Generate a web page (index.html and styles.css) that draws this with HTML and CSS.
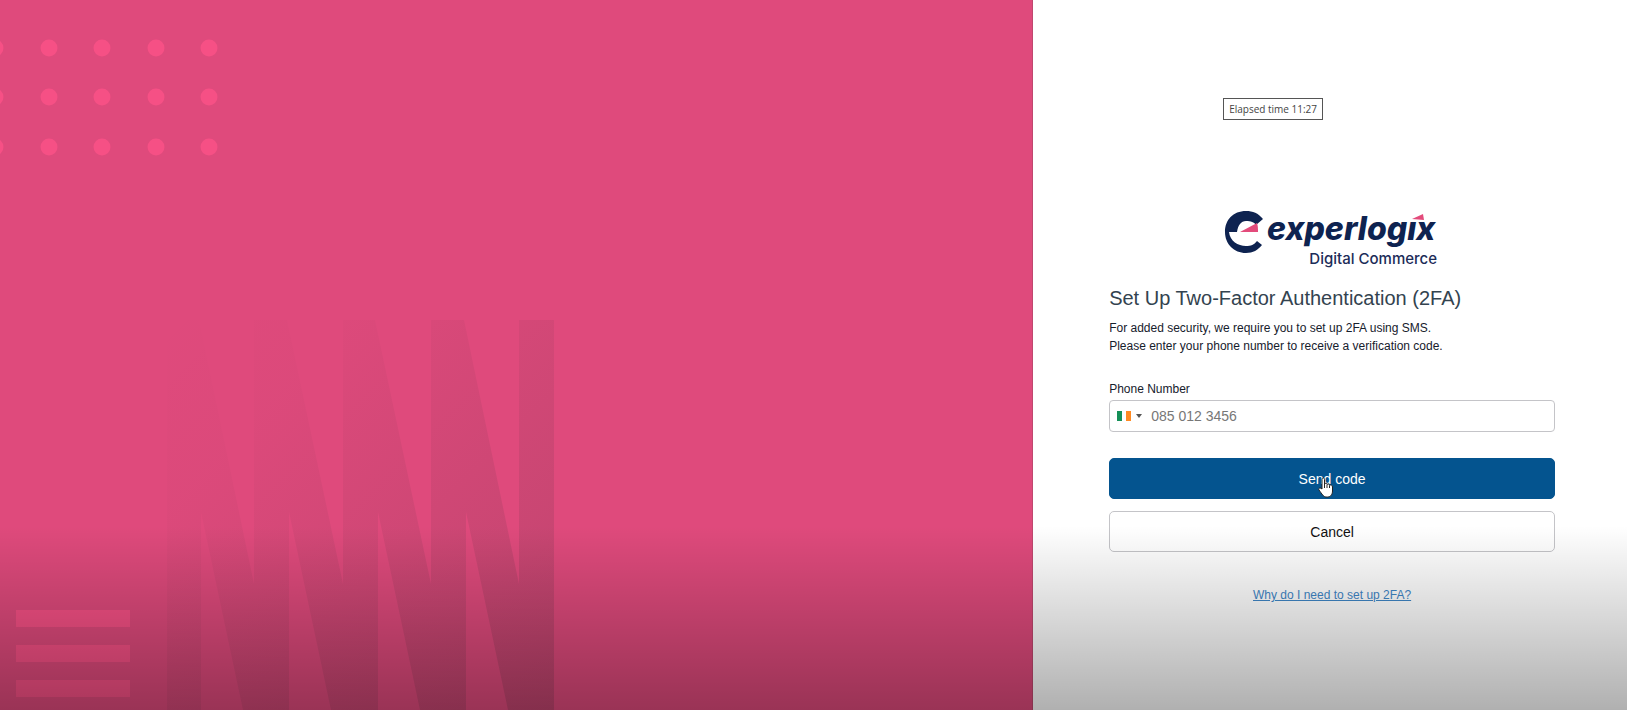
FILE: index.html
```html
<!DOCTYPE html>
<html lang="en">
<head>
  <meta charset="utf-8">
  <title>Set Up Two-Factor Authentication</title>
  <link rel="stylesheet" href="styles.css">
</head>
<body>
  <div class="page">
    <div class="brand-panel">
      <svg class="dots" width="220" height="170" aria-hidden="true">
        <defs>
          <g id="dot-row">
            <circle cx="-5" r="8.5" />
            <circle cx="49" r="8.5" />
            <circle cx="102" r="8.5" />
            <circle cx="156" r="8.5" />
            <circle cx="209" r="8.5" />
          </g>
        </defs>
        <use href="#dot-row" y="48" />
        <use href="#dot-row" y="97" />
        <use href="#dot-row" y="147" />
      </svg>

      <div class="brand-bottom">
        <div class="bars">
          <div class="bar"></div>
          <div class="bar"></div>
          <div class="bar"></div>
        </div>
        <svg class="zigzag" width="387" height="390" viewBox="0 0 387 390" aria-hidden="true">
          <defs>
            <linearGradient id="fade" gradientUnits="userSpaceOnUse" x1="0" y1="0" x2="387" y2="390">
              <stop offset="0" stop-color="#3a2c34" stop-opacity="0" />
              <stop offset="0.25" stop-color="#3a2c34" stop-opacity="0.02" />
              <stop offset="1" stop-color="#3a2c34" stop-opacity="0.19" />
            </linearGradient>
          </defs>
          <path fill="url(#fade)" d="M0 0H32L87 264V0H120L176 264V0H208L264 264V0H297L352 264V0H387V390H341L299 192V390H253L211 192V390H164L122 192V390H76L34 192V390H0Z" />
        </svg>
      </div>
    </div>

    <main class="form-panel">
      <div class="tooltip">Elapsed time 11:27</div>

      <svg class="logo" width="216" height="62" viewBox="0 0 216 62" role="img" aria-label="experlogix Digital Commerce">
        <path fill="#0e2350" d="M39 9C34 3 29 1 22 1C9 1 1 10 1 22C1 34 10 43 22 43C29 43 34 40 38 35L33 31C30 35 27 36 22 36C14 36 6 31 5 22H13C14 15 17 11 22 11C27 11 30 12 32 15Z" />
        <path fill="#e34b7b" d="M16 22L33 13C34 16 34 19 34 22Z" />
        <text class="logo-name" x="43" y="30">experlogix</text>
        <rect fill="#fff" x="179" y="0" width="18" height="11" />
        <path fill="#e34b7b" d="M188 9L199 4L200 10Z" />
        <text class="logo-sub" x="213" y="54" text-anchor="end">Digital Commerce</text>
      </svg>

      <h1>Set Up Two-Factor Authentication (2FA)</h1>
      <p class="intro">For added security, we require you to set up 2FA using SMS.<br>Please enter your phone number to receive a verification code.</p>

      <form>
        <label for="phone">Phone Number</label>
        <div class="phone-field">
          <button type="button" class="country" aria-label="Ireland">
            <span class="flag"></span>
            <span class="caret"></span>
          </button>
          <input type="tel" id="phone" placeholder="085 012 3456">
        </div>
        <button type="button" class="btn btn-primary">Send code
          <svg class="cursor" width="16" height="21" viewBox="0 0 16 21" aria-hidden="true">
            <path fill="#fff" stroke="#222" d="M4 12V2.500C4 .5 6.500 .5 6.500 2.500V7C7 6 9 6 9 7.500C10 6.500 11.500 7 11.500 8.500C12.500 7.500 14.500 8 14.500 10V14C14.500 17 13 20 9.500 20H8C5.500 20 4 17 1 13C0 11.500 2 10 4 12Z" />
            <path fill="none" stroke="#222" d="M6.500 7V11M9 8V11M11.500 9V11" />
          </svg>
        </button>
        <button type="button" class="btn">Cancel</button>
      </form>

      <a class="help" href="#">Why do I need to set up 2FA?</a>
    </main>
  </div>
</body>
</html>
```
FILE: styles.css
```css
* {
  box-sizing: border-box;
}

body {
  margin: 0;
  font-family: "Liberation Sans", Arial, sans-serif;
  font-size: 12px;
  color: #16202c;
  background: #fff;
}

.page {
  display: grid;
  grid-template-columns: 63.5% 1fr;
  min-height: 100vh;
  position: relative;
}

/* Shade along the bottom of the whole page */
.page::after {
  content: "";
  position: absolute;
  left: 0;
  right: 0;
  bottom: 0;
  height: 184px;
  background: linear-gradient(rgba(0, 0, 0, 0), rgba(0, 0, 0, 0.31));
  pointer-events: none;
}

/* Left side */
.brand-panel {
  display: flex;
  flex-direction: column;
  justify-content: space-between;
  background: #df4a7c;
  border-right: 1px solid #c0476f;
  overflow: hidden;
}

.dots {
  display: block;
  fill: #f65085;
}

.brand-bottom {
  display: flex;
  align-items: flex-end;
  gap: 37px;
  padding-left: 16px;
}

.bars {
  display: flex;
  flex-direction: column;
  gap: 18px;
  padding-bottom: 13px;
}

.bar {
  width: 114px;
  height: 17px;
  background: #f65085;
}

.zigzag {
  display: block;
}

/* Right side */
.form-panel {
  position: relative;
  display: flex;
  flex-direction: column;
  padding: 210px 72px 40px 76px;
}

.tooltip {
  position: absolute;
  top: 98px;
  left: 190px;
  padding: 0 5px;
  border: 1px solid #555;
  background: #fff;
  color: #444;
  font-family: "Open Sans", sans-serif;
  font-size: 10px;
  line-height: 20px;
}

.logo {
  align-self: center;
}

.logo-name {
  font: italic 800 32px Inter, sans-serif;
  fill: #0e2350;
}

.logo-sub {
  font: 500 15px Inter, sans-serif;
  fill: #1c2c58;
}

h1 {
  margin: 14px 0 8px;
  font-size: 20px;
  font-weight: normal;
  line-height: 25px;
  color: #33434f;
}

.intro {
  margin: 0 0 25px;
  line-height: 18px;
}

form {
  display: flex;
  flex-direction: column;
}

label {
  line-height: 18px;
  margin-bottom: 2px;
}

.phone-field {
  display: flex;
  height: 32px;
  margin-bottom: 26px;
  border: 1px solid #c4c4c8;
  border-radius: 4px;
  background: #fff;
}

.country {
  display: flex;
  align-items: center;
  gap: 5px;
  padding: 0 0 0 7px;
  border: 0;
  background: none;
}

.flag {
  width: 14px;
  height: 10px;
  background: linear-gradient(90deg, #159058 33%, #fff 33%, #fff 66%, #ff8a22 66%);
}

.caret {
  border: 3px solid transparent;
  border-top: 4px solid #555;
  border-bottom: 0;
}

.phone-field input {
  flex: 1;
  min-width: 0;
  padding: 0 9px;
  border: 0;
  outline: 0;
  background: none;
  font: 14px "Liberation Sans", Arial, sans-serif;
}

.phone-field input::placeholder {
  color: #777;
}

.btn {
  position: relative;
  height: 41px;
  border: 1px solid #c4c4c8;
  border-radius: 5px;
  background: #fff;
  color: #111;
  font: 14px "Liberation Sans", Arial, sans-serif;
}

.btn-primary {
  margin-bottom: 12px;
  border-color: #04548f;
  background: #04548f;
  color: #fff;
}

/* Hand pointer over the button text */
.cursor {
  position: absolute;
  top: 18px;
  left: 208px;
}

.help {
  align-self: center;
  margin-top: 34px;
  line-height: 18px;
  color: #3f86c6;
}
```
